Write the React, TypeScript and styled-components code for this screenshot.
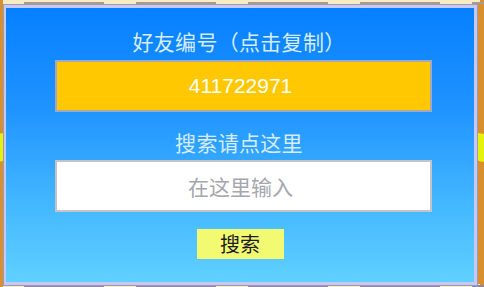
import React from 'react';
import styled, { createGlobalStyle } from 'styled-components';

const GlobalStyle = createGlobalStyle`
  html, body {
    margin: 0;
    padding: 0;
    background: #e6a240;
  }
  body {
    font-family: "Liberation Sans", "Noto Sans CJK SC", sans-serif;
  }
`;

// wooden game board showing behind the dialog
const Stage = styled.div`
  position: relative;
  width: 484px;
  height: 287px;
  overflow: hidden;
  box-sizing: border-box;
  padding: 5px 0 0 4px;
  background:
    repeating-linear-gradient(90deg, transparent 0 24px, #a89a94 24px 104px, transparent 104px 112px) 0 2px / 100% 2px no-repeat,
    repeating-linear-gradient(90deg, transparent 0 24px, #8e8a9a 24px 104px, transparent 104px 112px) 0 285px / 100% 2px no-repeat,
    linear-gradient(#f8ecc2, #f8ecc2) 3px 0 / 477px 4px no-repeat,
    linear-gradient(#f8ecc2, #f8ecc2) 3px 284px / 477px 3px no-repeat,
    linear-gradient(90deg, #d8902e, #eab04c 50%, #d8902e);
`;

const Arrow = styled.div<{ $side: 'left' | 'right' }>`
  position: absolute;
  top: 134px;
  ${({ $side }) => ($side === 'left' ? 'left: -9px;' : 'right: -7px;')}
  width: 14px;
  height: 28px;
  background: #e4f20c;
  border-radius: 3px;
  transform: skewY(${({ $side }) => ($side === 'left' ? '-12deg' : '12deg')});
`;

const Panel = styled.div`
  position: relative;
  z-index: 1;
  width: 473px;
  height: 280px;
  box-sizing: border-box;
  border-style: solid;
  border-color: #c8c8f2;
  border-width: 3px 3px 3px 2px;
  box-shadow: 0 0 0 1px #9a9abc;
  background: linear-gradient(#0680fe, #1e92ff 35%, #42b6ff 70%, #60d0ff);
  display: flex;
  flex-direction: column;
  align-items: center;
  padding-top: 19px;
`;

const Caption = styled.div<{ $gap?: number }>`
  margin-top: ${({ $gap }) => $gap ?? 0}px;
  font-family: "Noto Sans CJK SC", "Liberation Sans", sans-serif;
  font-size: 21px;
  line-height: 28px;
  color: #d6ecff;
  letter-spacing: 0.3px;
  padding-right: 2px;
`;

const Field = styled.div<{ $tone: 'id' | 'input'; $gap: number }>`
  align-self: flex-start;
  margin: ${({ $gap }) => $gap}px 0 0 49px;
  width: 377px;
  height: 52px;
  box-sizing: border-box;
  border: 2px solid ${({ $tone }) => ($tone === 'id' ? '#a4a8bc' : '#c4c4c8')};
  background: ${({ $tone }) => ($tone === 'id' ? '#ffc800' : '#ffffff')};
  color: ${({ $tone }) => ($tone === 'id' ? '#ffffff' : '#a6a6ae')};
  display: flex;
  align-items: center;
  justify-content: center;
  padding-right: 6px;
  font-family: "Liberation Sans", "Noto Sans CJK SC", sans-serif;
  font-size: 21px;
  cursor: pointer;
`;

const SearchButton = styled.button`
  margin-top: 17px;
  width: 87px;
  height: 30px;
  border: none;
  padding: 0;
  background: #f2fa72;
  color: #1c1c1c;
  font-family: "Noto Sans CJK SC", "Liberation Sans", sans-serif;
  font-size: 20px;
  line-height: 30px;
  cursor: pointer;
`;

export default function App() {
  return (
    <>
      <GlobalStyle />
      <Stage>
        <Arrow $side="left" />
        <Arrow $side="right" />
        <Panel>
          <Caption>好友编号（点击复制）</Caption>
          <Field $tone="id" $gap={5}>411722971</Field>
          <Caption $gap={16}>搜索请点这里</Caption>
          <Field $tone="input" $gap={4}>在这里输入</Field>
          <SearchButton>搜索</SearchButton>
        </Panel>
      </Stage>
    </>
  );
}
